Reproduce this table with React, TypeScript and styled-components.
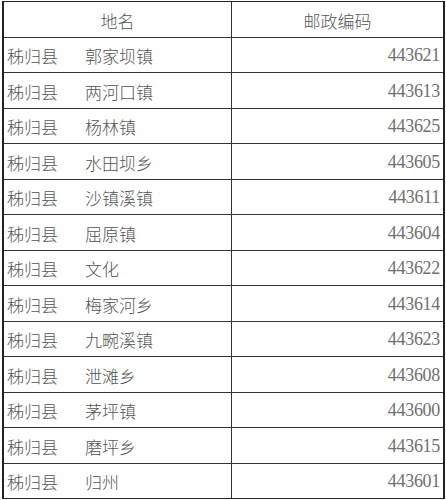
import React from "react";
import styled, { createGlobalStyle } from "styled-components";

const GlobalStyle = createGlobalStyle`
  html, body {
    margin: 0;
    padding: 0;
    background: #fff;
  }
`;

const Sheet = styled.div`
  box-sizing: border-box;
  width: 446px;
  height: 500px;
  padding: 1px 1px 1px 2px;
  background: #fff;
`;

const Grid = styled.div`
  box-sizing: border-box;
  height: 100%;
  display: grid;
  grid-template-columns: 227px 1fr;
  grid-template-rows: repeat(14, 1fr);
  gap: 1px;
  background: #333;
  border: solid #222;
  border-width: 1px 2px 1px 2px;
`;

const Cell = styled.div<{ $align?: "left" | "center" | "right" }>`
  background: #fff;
  display: flex;
  align-items: center;
  justify-content: ${({ $align }) =>
    $align === "center" ? "center" : $align === "right" ? "flex-end" : "flex-start"};
  padding: 2px 3px 0 3px;
  color: #555;
  font-family: "Noto Sans CJK SC", sans-serif;
  font-size: 17px;
  font-weight: 300;
  white-space: nowrap;
  overflow: hidden;
`;

const County = styled.span`
  display: inline-block;
  width: 78px;
`;

const Code = styled.span`
  font-family: "Liberation Serif", serif;
  font-size: 18px;
  color: #707070;
  letter-spacing: -0.3px;
`;

type TPlace = { county: string; town: string; code: string };

const places: TPlace[] = [
  { county: "秭归县", town: "郭家坝镇", code: "443621" },
  { county: "秭归县", town: "两河口镇", code: "443613" },
  { county: "秭归县", town: "杨林镇", code: "443625" },
  { county: "秭归县", town: "水田坝乡", code: "443605" },
  { county: "秭归县", town: "沙镇溪镇", code: "443611" },
  { county: "秭归县", town: "屈原镇", code: "443604" },
  { county: "秭归县", town: "文化", code: "443622" },
  { county: "秭归县", town: "梅家河乡", code: "443614" },
  { county: "秭归县", town: "九畹溪镇", code: "443623" },
  { county: "秭归县", town: "泄滩乡", code: "443608" },
  { county: "秭归县", town: "茅坪镇", code: "443600" },
  { county: "秭归县", town: "磨坪乡", code: "443615" },
  { county: "秭归县", town: "归州", code: "443601" },
];

const row = ({ county, town, code }: TPlace): JSX.Element => (
  <React.Fragment key={code}>
    <Cell>
      <County>{county}</County>
      {town}
    </Cell>
    <Cell $align="right">
      <Code>{code}</Code>
    </Cell>
  </React.Fragment>
);

export default function App(): JSX.Element {
  return (
    <>
      <GlobalStyle />
      <Sheet>
        <Grid>
          <Cell $align="center">地名</Cell>
          <Cell $align="center">邮政编码</Cell>
          {places.map(row)}
        </Grid>
      </Sheet>
    </>
  );
}
